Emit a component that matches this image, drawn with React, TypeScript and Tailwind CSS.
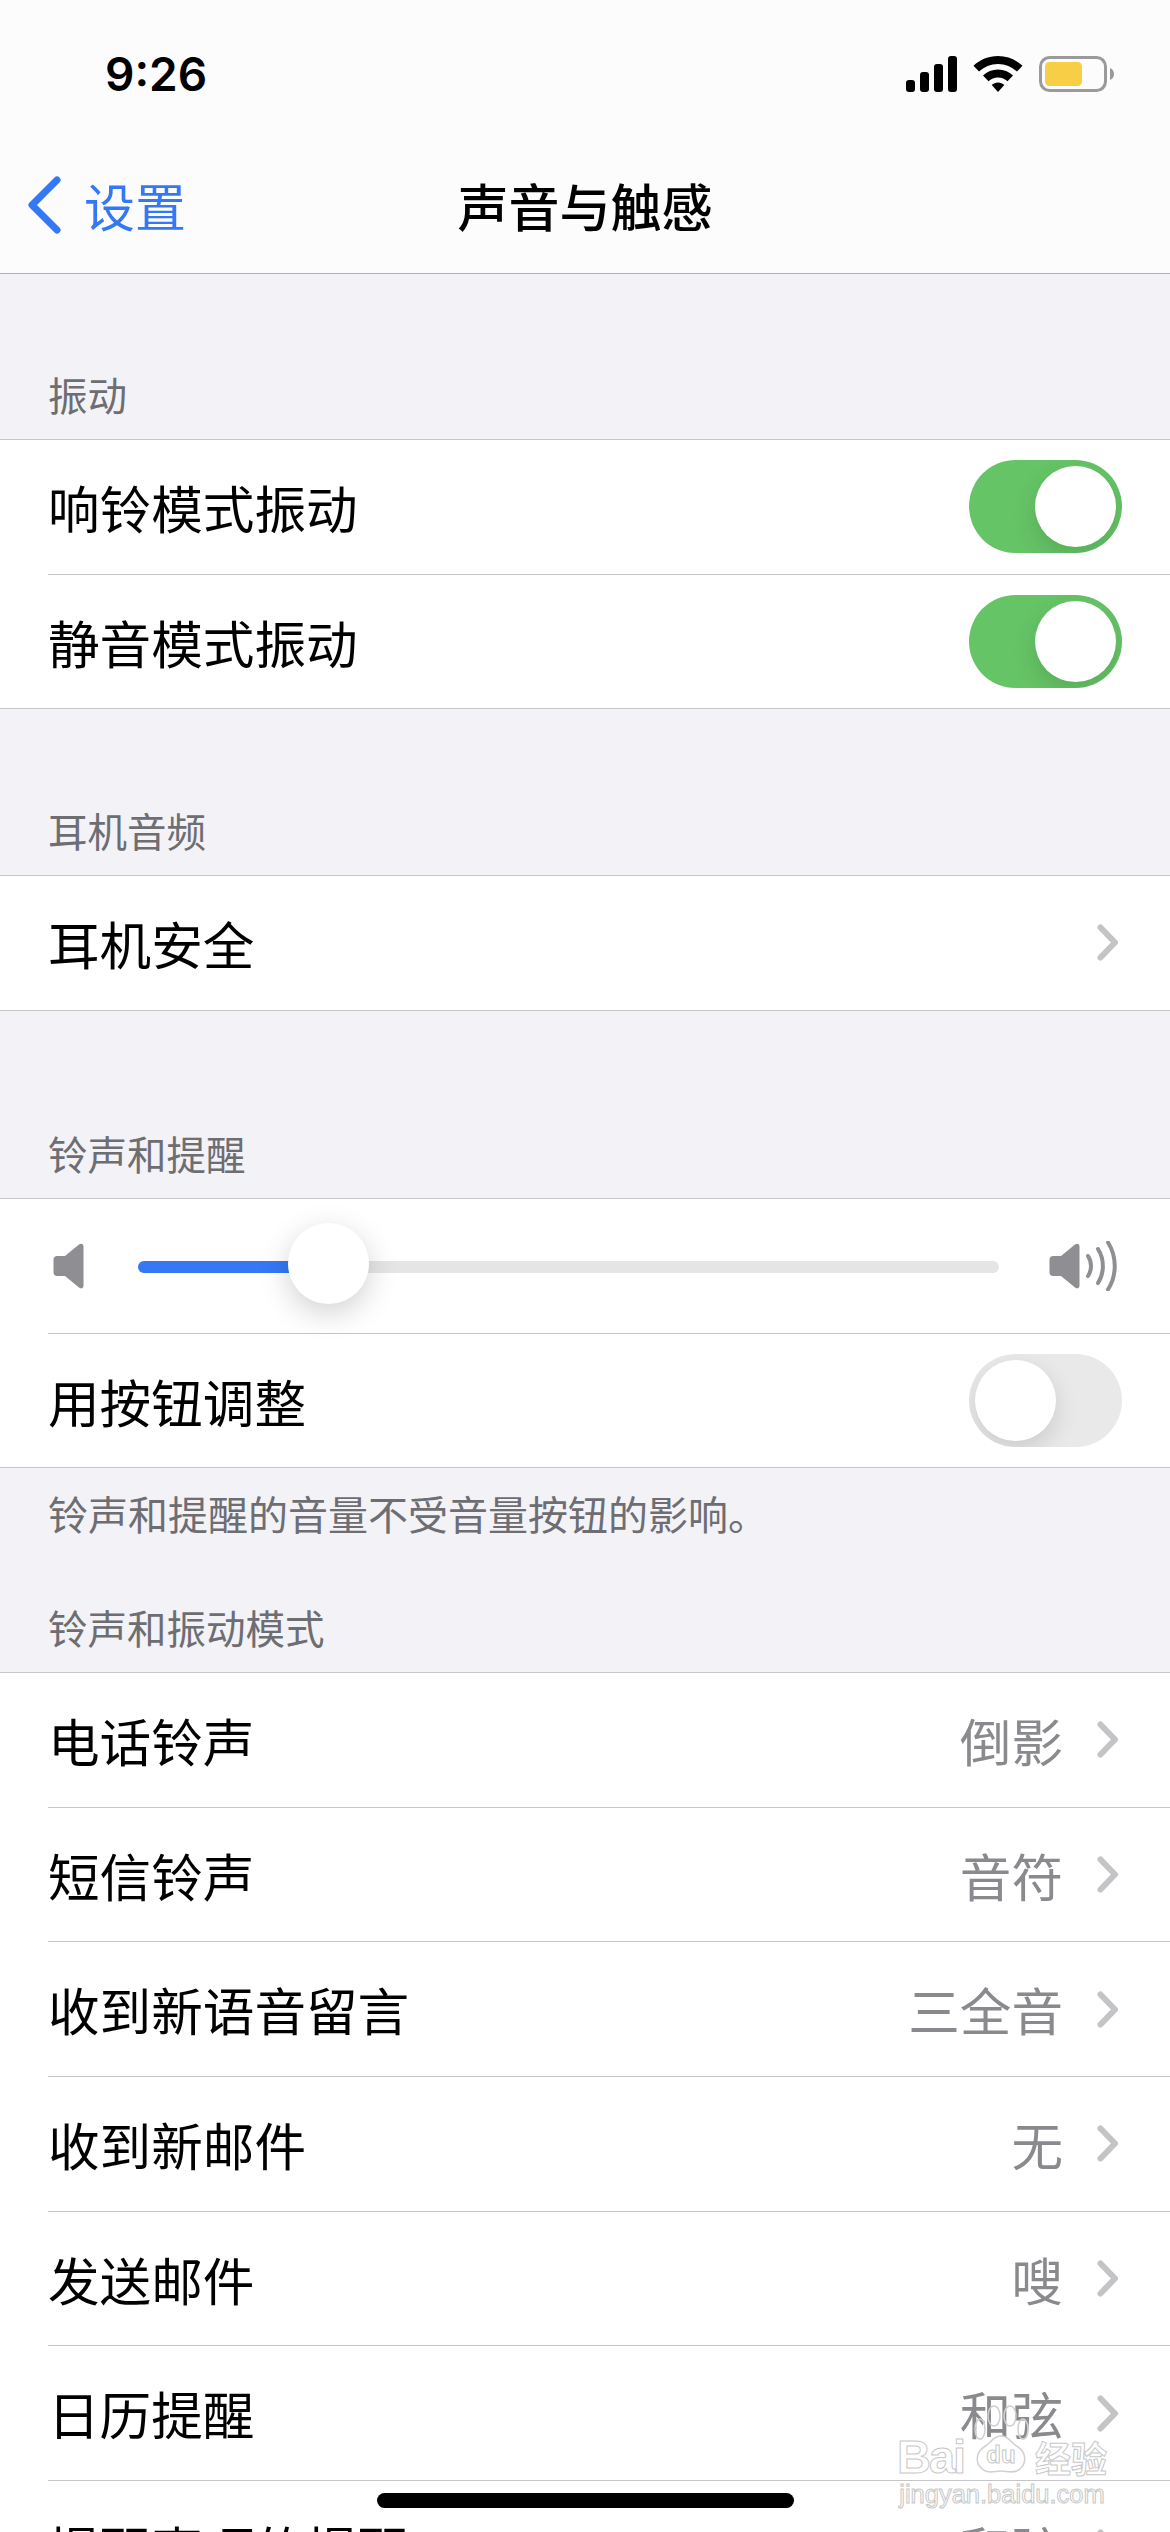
const cjk = "font-['Noto_Sans_CJK_SC','Noto_Sans',sans-serif]";

function Toggle({ on }: { on: boolean }) {
  return (
    <div
      className={`flex h-[93px] w-[153px] items-center overflow-hidden rounded-full p-[6px] ${
        on ? "justify-end bg-[#65c466]" : "justify-start bg-[#e9e9ea]"
      }`}
    >
      <div className="h-[81px] w-[81px] rounded-full bg-white shadow-[0_9px_24px_rgba(0,0,0,0.13)]" />
    </div>
  );
}

function Chevron() {
  return (
    <svg width="22" height="37" viewBox="0 0 22 37" fill="none" className="ml-[34px] mr-[3px] shrink-0">
      <path d="M3.5 3.5 18 18.5 3.5 33.5" stroke="#c4c4c7" strokeWidth="6" strokeLinecap="round" strokeLinejoin="round" />
    </svg>
  );
}

function Row({ label, value, last, children }: {
  label: string;
  value?: string;
  last?: boolean;
  children?: React.ReactNode;
}) {
  return (
    <div className="pl-[48px]">
      <div className={`flex items-center pr-[48px] ${last ? "h-[133.67px]" : "h-[134.67px] border-b border-[#c6c6c8]"}`}>
        <span className="flex-1 text-[51.6px] leading-none text-black">{label}</span>
        {value && <span className="text-[51.6px] leading-none text-[#8a8a8e]">{value}</span>}
        {children ?? <Chevron />}
      </div>
    </div>
  );
}

function Card({ children }: { children: React.ReactNode }) {
  return <div className="border-y border-[#c6c6c8] bg-white">{children}</div>;
}

function SectionHeader({ title, height }: { title: string; height: string }) {
  return (
    <div className={`flex items-end pb-[25px] pl-[48px] text-[39.5px] leading-[40px] text-[#6d6d72] ${height}`}>
      {title}
    </div>
  );
}

function SpeakerLow() {
  return (
    <svg width="32" height="46" viewBox="0 0 32 46" className="shrink-0">
      <path d="M4 13h8L26 1.500c2.500-1.800 4.500-.5 4.500 2v39c0 2.500-2 3.800-4.500 2L12 33H4c-2 0-3.500-1.500-3.500-3.500v-13C.5 14.500 2 13 4 13z" fill="#8e8e93" />
    </svg>
  );
}

function SpeakerHigh() {
  return (
    <svg width="68" height="50" viewBox="0 0 68 50" className="shrink-0">
      <path d="M4 15h8L26 3.500c2.500-1.800 4.500-.5 4.500 2v39c0 2.500-2 3.800-4.500 2L12 35H4c-2 0-3.500-1.500-3.500-3.500v-13C.5 16.500 2 15 4 15z" fill="#8e8e93" />
      <path d="M39 15c4 6 4 14 0 20M49 8c6.500 10 6.500 24 0 34M59 1.500c9 14 9 33 0 47" fill="none" stroke="#8e8e93" strokeWidth="4" strokeLinecap="round" />
    </svg>
  );
}

function StatusIcons() {
  return (
    <div className="flex items-center">
      <svg width="51" height="36" viewBox="0 0 51 36">
        <rect x="0" y="24" width="9" height="12" rx="3" fill="#000" />
        <rect x="14" y="16" width="9" height="20" rx="3" fill="#000" />
        <rect x="28" y="8" width="9" height="28" rx="3" fill="#000" />
        <rect x="42" y="0" width="9" height="36" rx="3" fill="#000" />
      </svg>
      <svg width="50" height="36" viewBox="0 0 50 36" className="ml-[16px]">
        <path d="M25 0c9.500 0 18 3.700 24.500 9.700L44 15.600C39 11 32.400 8 25 8S11 11 6 15.600L.5 9.700C7 3.700 15.500 0 25 0z" fill="#000" />
        <path d="M25 13.500c5.700 0 11 2.200 15 6l-5.500 5.800c-2.500-2.300-5.800-3.800-9.500-3.800s-7 1.500-9.500 3.800L10 19.500c4-3.800 9.300-6 15-6z" fill="#000" />
        <path d="M25 26.500c2.500 0 4.700.9 6.300 2.400L25 36l-6.300-7.100c1.600-1.500 3.800-2.400 6.300-2.400z" fill="#000" />
      </svg>
      <svg width="76" height="36" viewBox="0 0 76 36" className="ml-[16px]">
        <rect x="1.500" y="1.500" width="65" height="33" rx="9" fill="none" stroke="#9a9a9c" strokeWidth="3" />
        <rect x="6" y="6" width="37" height="24" rx="4.500" fill="#f7ce46" />
        <path d="M71 12c2.500 1 4 3.300 4 6s-1.500 5-4 6z" fill="#9a9a9c" />
      </svg>
    </div>
  );
}

// baidu jingyan stamp, sits over the last rows
function Watermark() {
  const outline = "text-transparent [-webkit-text-stroke:1px_#c8c8c8]";
  return (
    <div className="absolute left-[897px] top-[2405px] flex w-[210px] flex-col items-center font-['Liberation_Sans',sans-serif]">
      <div className="flex h-[70px] w-full items-end">
        <span className={`w-[74px] text-[47px] font-bold leading-[36px] tracking-[-2px] ${outline}`}>Bai</span>
        <div className="relative h-[70px] w-[60px] shrink-0">
          <svg width="60" height="70" viewBox="0 0 60 70" className="absolute inset-0">
            <g fill="none" stroke="#d0d0d0" strokeWidth="1.500">
              <ellipse cx="9" cy="24" rx="5" ry="10" />
              <ellipse cx="23" cy="11" rx="6" ry="10" />
              <ellipse cx="39" cy="11" rx="6" ry="10" />
              <ellipse cx="52" cy="24" rx="5" ry="10" />
              <path d="M30 31c-8 0-10 7-17 11C5 47 4 58 11 64c6 5 13 2 19 2s13 3 19-2c7-6 6-17-2-22-7-4-9-11-17-11z" />
            </g>
          </svg>
          <span className={`absolute bottom-[8px] left-0 w-full text-center text-[24px] font-bold leading-[24px] ${outline}`}>du</span>
        </div>
        <span className={`ml-[4px] whitespace-nowrap text-[36px] font-bold leading-[36px] ${cjk} ${outline}`}>经验</span>
      </div>
      <div className={`mt-[5px] whitespace-nowrap text-[25.500px] leading-[28px] ${outline}`}>jingyan.baidu.com</div>
    </div>
  );
}

const tones = [
  { label: "电话铃声", value: "倒影" },
  { label: "短信铃声", value: "音符" },
  { label: "收到新语音留言", value: "三全音" },
  { label: "收到新邮件", value: "无" },
  { label: "发送邮件", value: "嗖" },
  { label: "日历提醒", value: "和弦" },
  { label: "提醒事项的提醒", value: "和弦" },
];

export default function App() {
  return (
    <div className={`relative h-[2532px] w-[1170px] overflow-hidden bg-[#f2f2f7] ${cjk}`}>
      <header className="h-[274px] border-b border-[#b2b2b2] bg-[#fcfcfc]">
        <div className="flex h-[146px] items-center justify-between pl-[105px] pr-[55px] pt-[2px]">
          <span className="font-['Inter',sans-serif] text-[46px] font-semibold leading-none text-black">9:26</span>
          <StatusIcons />
        </div>
        <div className="relative flex h-[122px] items-center justify-center pb-[3px]">
          <div className="absolute left-[27px] top-[30px] flex items-center">
            <svg width="34" height="58" viewBox="0 0 34 58" fill="none">
              <path d="M30 4 5 29l25 25" stroke="#3478f6" strokeWidth="7" strokeLinecap="round" strokeLinejoin="round" />
            </svg>
            <span className="ml-[23px] text-[51px] leading-none text-[#3478f6]">设置</span>
          </div>
          <span className="text-[51px] font-medium leading-none text-black">声音与触感</span>
        </div>
      </header>

      <SectionHeader title="振动" height="h-[165px]" />
      <Card>
        <Row label="响铃模式振动"><Toggle on /></Row>
        <Row label="静音模式振动" last><Toggle on /></Row>
      </Card>

      <SectionHeader title="耳机音频" height="h-[165.67px]" />
      <Card>
        <Row label="耳机安全" last />
      </Card>

      <SectionHeader title="铃声和提醒" height="h-[187.33px]" />
      <Card>
        <div className="pl-[48px]">
          <div className="flex h-[134.67px] items-center border-b border-[#c6c6c8] pr-[53px]">
            <div className="ml-[5px]"><SpeakerLow /></div>
            <div className="relative ml-[53px] mr-[50px] mt-[2px] flex h-[12px] flex-1 items-center rounded-full bg-[#e5e5e5]">
              <div className="h-full w-[160px] rounded-full bg-[#3478f6]" />
              <div className="absolute left-[150px] top-[-38px] h-[81px] w-[81px] rounded-full bg-white shadow-[0_9px_30px_rgba(0,0,0,0.18)]" />
            </div>
            <SpeakerHigh />
          </div>
        </div>
        <Row label="用按钮调整" last><Toggle on={false} /></Row>
      </Card>

      <div className="h-[96px] pl-[48px] pt-[25px] text-[40px] leading-[40px] text-[#6d6d72]">
        铃声和提醒的音量不受音量按钮的影响。
      </div>
      <SectionHeader title="铃声和振动模式" height="h-[107.67px]" />
      <Card>
        {tones.map((t) => (
          <Row key={t.label} label={t.label} value={t.value} />
        ))}
      </Card>

      <div className="absolute left-[377px] top-[2493px] h-[15px] w-[417px] rounded-full bg-black" />
      <Watermark />
    </div>
  );
}
